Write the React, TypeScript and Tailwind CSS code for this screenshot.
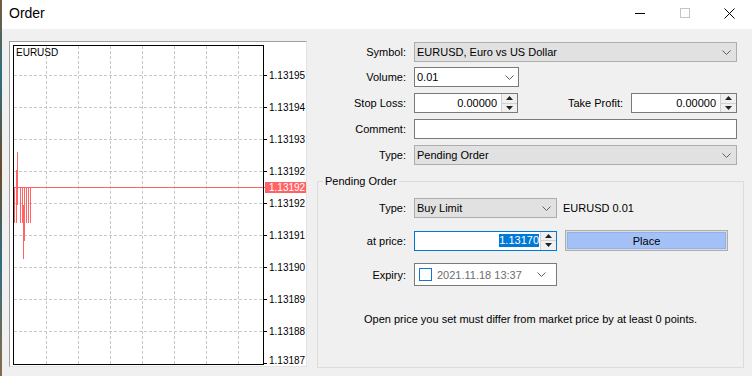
import React from "react";

const gridY = [33, 65, 97, 129, 161, 193, 225, 257, 289];
const gridX = [36, 68, 100, 132, 164, 196, 228];
const axisLabels: [number, string][] = [
  [33, "1.13195"],
  [65, "1.13194"],
  [97, "1.13193"],
  [129, "1.13192"],
  [161, "1.13192"],
  [193, "1.13191"],
  [225, "1.13190"],
  [257, "1.13189"],
  [289, "1.13188"],
  [318, "1.13187"],
];

// x, top, bottom (chart coords)
const bars: [number, number, number][] = [
  [4.5, 145, 181],
  [6.5, 128, 181],
  [7.5, 110, 163],
  [10.5, 145, 181],
  [12.5, 145, 181],
  [13.5, 163, 217],
  [14.5, 145, 199],
  [16.5, 145, 181],
  [18.5, 145, 181],
  [20.5, 145, 181],
];

function Chart() {
  return (
    <div className="h-[326px] w-[298px] shrink-0 border border-t-[#a0a0a0] border-l-[#a0a0a0] border-r-[#e3e3e3] border-b-[#e3e3e3] bg-white">
      <svg width="296" height="324" className="block" fontFamily="'Liberation Sans', Arial, sans-serif">
        {gridY.map((y) => (
          <line key={"h" + y} x1="4" x2="253" y1={y + 0.5} y2={y + 0.5} stroke="#c8c8c8" strokeDasharray="3 2" />
        ))}
        {gridX.map((x) => (
          <line key={"v" + x} x1={x + 0.5} x2={x + 0.5} y1="4" y2="322" stroke="#c8c8c8" strokeDasharray="3 2" />
        ))}
        {bars.map(([x, a, b], i) => (
          <line key={i} x1={x} x2={x} y1={a} y2={b} stroke="#ff6464" />
        ))}
        <line x1="3" x2="255" y1="145.5" y2="145.5" stroke="#ff6464" />
        <rect x="3.5" y="3.5" width="250" height="319" fill="none" stroke="#000" />
        {gridY.map((y) => (
          <line key={"t" + y} x1="254" x2="257" y1={y + 0.5} y2={y + 0.5} stroke="#000" />
        ))}
        <line x1="254" x2="257" y1="321.5" y2="321.5" stroke="#000" />
        {axisLabels.map(([y, t], i) => (
          <text key={i} x="259" y={y + 4} fontSize="10" fill="#000">
            {t}
          </text>
        ))}
        <rect x="255" y="140" width="41" height="11" fill="#ff6464" />
        <text x="259" y="149" fontSize="10" fill="#fff">
          1.13192
        </text>
        <text x="6" y="14" fontSize="10" fill="#000">
          EURUSD
        </text>
      </svg>
    </div>
  );
}

function Chevron() {
  return (
    <svg width="9" height="5" className="shrink-0">
      <polyline points="0.5,0.5 4.5,4.5 8.5,0.5" fill="none" stroke="#606060" />
    </svg>
  );
}

function Spinner() {
  return (
    <div className="flex h-full w-[16px] shrink-0 flex-col border-l border-[#d0d0d0] bg-[#f0f0f0]">
      <div className="flex flex-1 items-center justify-center border-b border-[#d0d0d0]">
        <svg width="7" height="4">
          <polygon points="0,4 3.5,0 7,4" fill="#222" />
        </svg>
      </div>
      <div className="flex flex-1 items-center justify-center">
        <svg width="7" height="4">
          <polygon points="0,0 3.5,4 7,0" fill="#222" />
        </svg>
      </div>
    </div>
  );
}

function GraySelect({ value, w }: { value: string; w: string }) {
  return (
    <div className={`flex h-[20px] ${w} items-center justify-between border border-[#adadad] bg-[#e1e1e1] pl-[2px] pr-[5px]`}>
      <span>{value}</span>
      <Chevron />
    </div>
  );
}

function Label({ w, children }: { w: string; children: React.ReactNode }) {
  return <div className={`${w} shrink-0 text-right`}>{children}</div>;
}

export default function App() {
  return (
    <div className="flex h-[376px] w-[752px] overflow-hidden font-['Liberation_Sans',Arial,sans-serif] text-[11px] leading-[16px] text-black">
      <div className="w-[2px] shrink-0 bg-[linear-gradient(180deg,#7a5a3a,#2e6e80_20%,#6b4a2a_45%,#2e6e80_70%,#8a6a45)]" />
      <div className="flex flex-1 flex-col">
        {/* title bar */}
        <div className="flex h-[29px] shrink-0 items-center justify-between bg-white pl-[7px]">
          <span className="pb-[3px] text-[14px]">Order</span>
          <div className="flex h-full">
            <div className="flex w-[45px] items-center justify-center pb-[3px]">
              <svg width="10" height="10">
                <line x1="0" x2="10" y1="5.5" y2="5.5" stroke="#000" />
              </svg>
            </div>
            <div className="flex w-[45px] items-center justify-center pb-[3px]">
              <svg width="10" height="10">
                <rect x="0.5" y="0.5" width="9" height="9" fill="none" stroke="#c4c4c4" />
              </svg>
            </div>
            <div className="flex w-[45px] items-center justify-center pb-[3px] pr-[1px]">
              <svg width="11" height="11">
                <line x1="0.5" y1="0.5" x2="10.5" y2="10.5" stroke="#000" />
                <line x1="10.5" y1="0.5" x2="0.5" y2="10.5" stroke="#000" />
              </svg>
            </div>
          </div>
        </div>

        {/* body */}
        <div className="flex flex-1 bg-[#f0f0f0] pl-[7px] pt-[12px]">
          <Chart />

          <div className="flex flex-1 flex-col pt-[1px]">
            <div className="flex h-[20px] items-center gap-[8px]">
              <Label w="w-[99px]">Symbol:</Label>
              <GraySelect value="EURUSD, Euro vs US Dollar" w="w-[323px]" />
            </div>

            <div className="mt-[5px] flex h-[20px] items-center gap-[8px]">
              <Label w="w-[99px]">Volume:</Label>
              <div className="flex h-[20px] w-[105px] items-center justify-between border border-[#7a7a7a] bg-white pl-[2px] pr-[4px]">
                <span>0.01</span>
                <Chevron />
              </div>
            </div>

            <div className="mt-[6px] flex h-[20px] items-center gap-[8px]">
              <Label w="w-[99px]">Stop Loss:</Label>
              <div className="flex h-[20px] w-[104px] border border-[#7a7a7a] bg-white">
                <div className="flex flex-1 items-center justify-end pr-[4px]">0.00000</div>
                <Spinner />
              </div>
              <Label w="w-[97px]">Take Profit:</Label>
              <div className="flex h-[20px] w-[106px] border border-[#7a7a7a] bg-white">
                <div className="flex flex-1 items-center justify-end pr-[4px]">0.00000</div>
                <Spinner />
              </div>
            </div>

            <div className="mt-[6px] flex h-[20px] items-center gap-[8px]">
              <Label w="w-[99px]">Comment:</Label>
              <div className="h-[20px] w-[323px] border border-[#7a7a7a] bg-white" />
            </div>

            <div className="mt-[6px] flex h-[20px] items-center gap-[8px]">
              <Label w="w-[99px]">Type:</Label>
              <GraySelect value="Pending Order" w="w-[323px]" />
            </div>

            <fieldset className="ml-[10px] mt-[8px] w-[427px] border border-[#dcdcdc] px-[5px] pb-[40px] pt-[9px]">
              <legend className="px-[2px] leading-[16px]">Pending Order</legend>

              <div className="flex h-[20px] items-center gap-[8px]">
                <Label w="w-[83px]">Type:</Label>
                <GraySelect value="Buy Limit" w="w-[143px]" />
                <span className="-ml-[2px]">EURUSD 0.01</span>
              </div>

              <div className="mt-[12px] flex h-[21px] items-center gap-[8px]">
                <Label w="w-[83px]">at price:</Label>
                <div className="flex h-[20px] w-[143px] border border-[#0078d7] bg-white">
                  <div className="flex flex-1 items-center justify-end pr-[1px]">
                    <span className="bg-[#0078d7] leading-[13px] text-white">1.13170</span>
                  </div>
                  <Spinner />
                </div>
                <div className="flex h-[21px] w-[163px] border border-[#adadad] bg-[#dcdcdc] p-[1px]">
                  <div className="flex flex-1 items-center justify-center border border-[#8eb0ee] bg-[#a3c1f7]">
                    Place
                  </div>
                </div>
              </div>

              <div className="mt-[12px] flex h-[23px] items-center gap-[8px]">
                <Label w="w-[83px]">Expiry:</Label>
                <div className="flex h-[23px] w-[143px] items-center border border-[#7a7a7a] bg-white pl-[4px] pr-[10px]">
                  <div className="h-[13px] w-[13px] shrink-0 border border-[#1a73d0] bg-white" />
                  <div className="ml-[5px] w-[86px] overflow-hidden whitespace-nowrap text-[#6d6d6d]">
                    2021.11.18 13:37
                  </div>
                  <div className="flex flex-1 justify-end">
                    <Chevron />
                  </div>
                </div>
              </div>

              <div className="mt-[25px] text-center">
                Open price you set must differ from market price by at least 0 points.
              </div>
            </fieldset>
          </div>
        </div>
      </div>
    </div>
  );
}
